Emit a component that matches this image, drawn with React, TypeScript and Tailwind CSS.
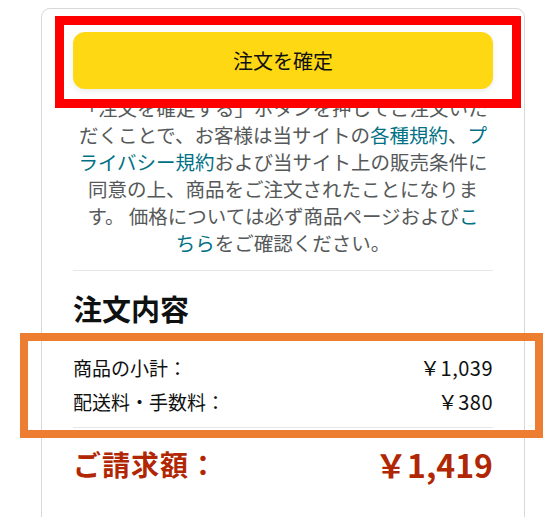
import React from "react";

export default function App() {
  return (
    <div className="relative w-[559px] h-[517px] overflow-hidden bg-white font-['Noto_Sans_CJK_JP',sans-serif] text-[#0f1111]">
      <div className="pt-[8px] pl-[41px]">
        <div className="w-[484px] h-[540px] rounded-[9px] border border-[#d5d9d9] px-[31px] pt-[23px]">
          <button className="w-full h-[57px] rounded-[12px] bg-[#ffd814] shadow-[0_2px_5px_rgba(213,217,217,0.5)] text-[20px] leading-none text-[#0f1111] flex items-center justify-center">
            注文を確定
          </button>
          <p className="mt-[5px] text-center text-[19.5px] leading-[27px] text-[#565959]">
            「注文を確定する」ボタンを押してご注文いた
            <br />
            だくことで、お客様は当サイトの<span className="text-[#007185]">各種規約</span>、<span className="text-[#007185]">プ</span>
            <br />
            <span className="text-[#007185]">ライバシー規約</span>および当サイト上の販売条件に
            <br />
            同意の上、商品をご注文されたことになりま
            <br />
            す。 価格については必ず商品ページおよび<span className="text-[#007185]">こ</span>
            <br />
            <span className="text-[#007185]">ちら</span>をご確認ください。
          </p>
          <div className="mt-[14px] h-px bg-[#e7e7e7]" />
          <h2 className="mt-[19px] text-[29px] leading-[36px] font-bold text-[#0f1111]">注文内容</h2>
          <div className="mt-[25px] text-[19px] leading-[34px] text-[#0f1111]">
            <div className="flex justify-between">
              <span>商品の小計：</span>
              <span className="text-[20px] tracking-[0.5px]">￥1,039</span>
            </div>
            <div className="flex justify-between">
              <span>配送料・手数料：</span>
              <span className="text-[20px] tracking-[0.5px]">￥380</span>
            </div>
          </div>
          <div className="mt-[8px] h-px bg-[#e7e7e7]" />
          <div className="mt-[18px] flex justify-between items-center leading-[36px] font-bold text-[#b12704]">
            <span className="text-[28px] tracking-[1px]">ご請求額：</span>
            <span className="text-[32px]">￥1,419</span>
          </div>
        </div>
      </div>
      <div className="absolute left-[55px] top-[16px] w-[466px] h-[92px] border-[9px] border-[#ff0000]" />
      <div className="absolute left-[20px] top-[333px] w-[523px] h-[105px] border-[8px] border-[#ed7d31]" />
    </div>
  );
}
